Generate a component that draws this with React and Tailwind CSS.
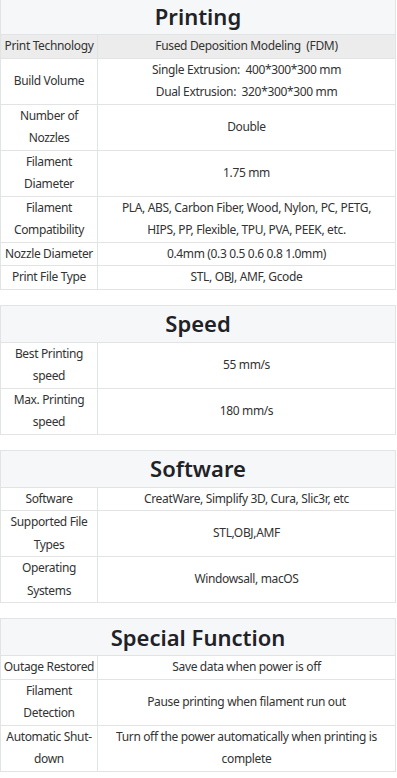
const SECTIONS = [
  {
    title: 'Printing',
    rows: [
      ['Print Technology', ['Fused Deposition Modeling  (FDM)'], true],
      ['Build Volume', ['Single Extrusion:  400*300*300 mm', 'Dual Extrusion:  320*300*300 mm']],
      ['Number of Nozzles', ['Double']],
      ['Filament Diameter', ['1.75 mm']],
      ['Filament Compatibility', ['PLA, ABS, Carbon Fiber, Wood, Nylon, PC, PETG,', 'HIPS, PP, Flexible, TPU, PVA, PEEK, etc.']],
      ['Nozzle Diameter', ['0.4mm (0.3 0.5 0.6 0.8 1.0mm)']],
      ['Print File Type', ['STL, OBJ, AMF, Gcode']],
    ],
  },
  {
    title: 'Speed',
    rows: [
      ['Best Printing speed', ['55 mm/s']],
      ['Max. Printing speed', ['180 mm/s']],
    ],
  },
  {
    title: 'Software',
    rows: [
      ['Software', ['CreatWare, Simplify 3D, Cura, Slic3r, etc']],
      ['Supported File Types', ['STL,OBJ,AMF']],
      ['Operating Systems', ['Windowsall, macOS']],
    ],
  },
  {
    title: 'Special Function',
    rows: [
      ['Outage Restored', ['Save data when power is off']],
      ['Filament Detection', ['Pause printing when filament run out']],
      ['Automatic Shut-down', ['Turn off the power automatically when printing is complete']],
    ],
  },
]

function SpecTable({ title, rows, first }) {
  return (
    <div className={`w-[396px] border border-[#e2e3e5] ${first ? 'mt-[-3px]' : ''} mb-[15px]`}>
      <div className="h-[37px] flex items-center justify-center bg-[#f6f7f9] border-b border-[#e2e3e5] text-[22px] font-semibold tracking-normal text-[#1f2226]">
        {title}
      </div>
      {rows.map(([label, value, shaded], i) => (
        <div key={label}
             className={`grid grid-cols-[97px_1fr] ${i < rows.length - 1 ? 'border-b border-[#e2e3e5]' : ''} ${shaded ? 'bg-[#ececec]' : ''}`}>
          <div className="flex items-center justify-center text-center border-r border-[#e2e3e5]">
            {label}
          </div>
          <div className="flex flex-col items-center justify-center text-center px-1">
            {value.map(v => (
              <span key={v} className="whitespace-pre-wrap">{v}</span>
            ))}
          </div>
        </div>
      ))}
    </div>
  )
}

export default function App() {
  return (
    <div className="w-[397px] bg-white text-[12px] leading-[22.5px] tracking-[-0.35px] text-[#333]"
         style={{ fontFamily: '"Noto Sans", "Open Sans", sans-serif' }}>
      {SECTIONS.map((s, i) => (
        <SpecTable key={s.title} title={s.title} rows={s.rows} first={i === 0} />
      ))}
    </div>
  )
}
